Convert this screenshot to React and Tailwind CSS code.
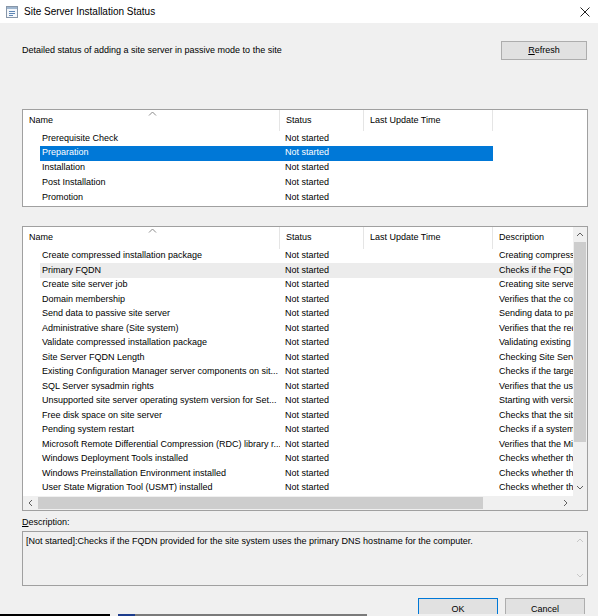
import React from 'react';

const stages = [
    { name: 'Prerequisite Check', status: 'Not started' },
    { name: 'Preparation', status: 'Not started', selected: true },
    { name: 'Installation', status: 'Not started' },
    { name: 'Post Installation', status: 'Not started' },
    { name: 'Promotion', status: 'Not started' },
];

const checks = [
    ['Create compressed installation package', 'Creating compressed installation package'],
    ['Primary FQDN', 'Checks if the FQDN provided for the site system', true],
    ['Create site server job', 'Creating site server job'],
    ['Domain membership', 'Verifies that the computer is a member of a domain'],
    ['Send data to passive site server', 'Sending data to passive site server'],
    ['Administrative share (Site system)', 'Verifies that the required administrative shares exist'],
    ['Validate compressed installation package', 'Validating existing compressed installation package'],
    ['Site Server FQDN Length', 'Checking Site Server FQDN length'],
    ['Existing Configuration Manager server components on sit...', 'Checks if the target site server has components'],
    ['SQL Server sysadmin rights', 'Verifies that the user account has sysadmin rights'],
    ['Unsupported site server operating system version for Set...', 'Starting with version 1702'],
    ['Free disk space on site server', 'Checks that the site server has free disk space'],
    ['Pending system restart', 'Checks if a system restart is pending'],
    ['Microsoft Remote Differential Compression (RDC) library r...', 'Verifies that the Microsoft RDC library is registered'],
    ['Windows Deployment Tools installed', 'Checks whether the Windows Deployment Tools are installed'],
    ['Windows Preinstallation Environment installed', 'Checks whether the Windows PE is installed'],
    ['User State Migration Tool (USMT) installed', 'Checks whether the USMT is installed'],
];

function Chevron({ dir = 'up', color = '#606060', className = '' }) {
    const d = {
        up: 'M1 5 L4 2 L7 5',
        down: 'M1 2 L4 5 L7 2',
        left: 'M5 1 L2 4 L5 7',
        right: 'M2 1 L5 4 L2 7',
    }[dir];
    return (
        <svg width="8" height="8" viewBox="0 0 8 8" className={className}>
            <path d={d} fill="none" stroke={color} strokeWidth="1" />
        </svg>
    );
}

function HeaderCell({ label, width, last }) {
    return (
        <div className={`${width} flex h-full shrink-0 items-center`}>
            <span className="flex-1 truncate pl-[6px]">{label}</span>
            {!last && <div className="h-full w-px bg-[#e5e5e5]" />}
        </div>
    );
}

function SortArrow() {
    return (
        <svg width="9" height="5" viewBox="0 0 9 5" className="absolute left-[125px] top-[1px]">
            <path d="M1 4.5 L4.5 1 L8 4.5" fill="none" stroke="#8a8a8a" strokeWidth="1" />
        </svg>
    );
}

export default function App() {
    return (
        <div className="flex h-[616px] w-[598px] flex-col overflow-hidden bg-[#f0f0f0] font-['Liberation_Sans',Arial,sans-serif] text-[9px] text-black">
            {/* title bar */}
            <div className="flex h-[23px] shrink-0 items-center bg-white pl-[6px] pr-[8px]">
                <svg width="12" height="12" viewBox="0 0 12 12">
                    <rect x="0.5" y="0.5" width="11" height="11" fill="#f4f7fb" stroke="#8796a8" />
                    <rect x="1" y="1" width="10" height="2" fill="#9fb6cf" />
                    <path d="M3 5.5 H9 M3 7.5 H9 M3 9.5 H7" stroke="#5d86b5" strokeWidth="1" />
                </svg>
                <span className="ml-[6px] text-[10px]">Site Server Installation Status</span>
                <svg width="10" height="10" viewBox="0 0 10 10" className="ml-auto">
                    <path d="M0.5 0.5 L9.5 9.5 M9.5 0.5 L0.5 9.5" stroke="#222" strokeWidth="1" />
                </svg>
            </div>

            <div className="flex flex-1 flex-col overflow-hidden pl-[22px] pr-[10px] pt-[18px]">
                <div className="flex items-center justify-between pr-px">
                    <span>Detailed status of adding a site server in passive mode to the site</span>
                    <button className="h-[19px] w-[86px] border border-[#adadad] bg-[#e1e1e1]">
                        <span className="underline">R</span>efresh
                    </button>
                </div>

                {/* stage list */}
                <div className="mt-[49px] h-[98px] shrink-0 overflow-hidden border border-[#a0a0a0] bg-white">
                    <div className="relative flex h-[21px]">
                        <SortArrow />
                        <HeaderCell label="Name" width="w-[257px]" />
                        <HeaderCell label="Status" width="w-[84px]" />
                        <HeaderCell label="Last Update Time" width="w-[129px]" />
                    </div>
                    {stages.map((s) => (
                        <div key={s.name} className="flex h-[14.75px] items-center">
                            <div className="w-[17px] shrink-0" />
                            <div className={`flex h-full items-center ${s.selected ? 'bg-[#0078d7] text-white' : ''}`}>
                                <span className="w-[240px] shrink-0 pl-[2px]">{s.name}</span>
                                <span className="w-[84px] shrink-0 pl-[5px]">{s.status}</span>
                                <span className="w-[129px] shrink-0" />
                            </div>
                        </div>
                    ))}
                </div>

                {/* prerequisite list */}
                <div className="mt-[19px] flex h-[285px] shrink-0 flex-col overflow-hidden border border-[#a0a0a0] bg-white">
                    <div className="flex min-h-0 flex-1">
                        <div className="w-[550px] shrink-0 overflow-hidden">
                            <div className="relative flex h-[21.5px]">
                                <SortArrow />
                                <HeaderCell label="Name" width="w-[257px]" />
                                <HeaderCell label="Status" width="w-[84px]" />
                                <HeaderCell label="Last Update Time" width="w-[129px]" />
                                <HeaderCell label="Description" width="w-[200px]" last />
                            </div>
                            {checks.map(([name, desc, hot]) => (
                                <div key={name} className="flex h-[14.5px] items-center whitespace-nowrap">
                                    <div className="w-[17px] shrink-0" />
                                    <div className={`flex h-full items-center ${hot ? 'bg-[#ececec]' : ''}`}>
                                        <span className="w-[240px] shrink-0 overflow-hidden pl-[2px]">{name}</span>
                                        <span className="w-[84px] shrink-0 pl-[5px]">Not started</span>
                                        <span className="w-[129px] shrink-0" />
                                        <span className="w-[200px] shrink-0 pl-[6px]">{desc}</span>
                                    </div>
                                </div>
                            ))}
                        </div>
                        {/* vertical scrollbar */}
                        <div className="flex w-[14px] shrink-0 flex-col bg-[#f0f0f0]">
                            <div className="flex h-[15px] items-center justify-center">
                                <Chevron dir="up" />
                            </div>
                            <div className="flex-1">
                                <div className="mx-[1px] h-[200px] bg-[#cdcdcd]" />
                            </div>
                            <div className="flex h-[17px] items-center justify-center">
                                <Chevron dir="down" />
                            </div>
                        </div>
                    </div>
                    {/* horizontal scrollbar */}
                    <div className="flex h-[14px] shrink-0">
                        <div className="flex w-[550px] bg-[#f0f0f0]">
                            <div className="flex w-[15px] items-center justify-center">
                                <Chevron dir="left" />
                            </div>
                            <div className="my-[1px] w-[445px] bg-[#cdcdcd]" />
                            <div className="flex-1" />
                            <div className="flex w-[15px] items-center justify-center">
                                <Chevron dir="right" />
                            </div>
                        </div>
                        <div className="w-[14px] bg-[#f0f0f0]" />
                    </div>
                </div>

                <div className="mt-[6px] leading-[11px]">
                    <span className="underline">D</span>escription:
                </div>
                <div className="mt-[3px] flex h-[55px] shrink-0 border border-[#a0a0a0] bg-[#f0f0f0]">
                    <div className="flex-1 pl-[3px] pt-[3px]">
                        [Not started]:Checks if the FQDN provided for the site system uses the primary DNS hostname for the computer.
                    </div>
                    <div className="flex w-[14px] flex-col items-center justify-between py-[5px]">
                        <Chevron dir="up" color="#c8c8c8" />
                        <Chevron dir="down" color="#c8c8c8" />
                    </div>
                </div>

                <div className="mt-[12px] flex justify-end gap-[7px] pr-[3px]">
                    <button className="h-[23px] w-[80px] border border-[#0078d7] bg-[#e1e1e1]">OK</button>
                    <button className="h-[23px] w-[80px] border border-[#adadad] bg-[#e1e1e1]">Cancel</button>
                </div>
            </div>

            {/* taskbar edge below the dialog */}
            <div className="flex h-[2px] shrink-0">
                <div className="w-[110px] bg-black" />
                <div className="w-[8px]" />
                <div className="w-[17px] bg-[#1c3c8c]" />
                <div className="w-[232px] bg-[#7a7a7a]" />
            </div>
        </div>
    );
}
